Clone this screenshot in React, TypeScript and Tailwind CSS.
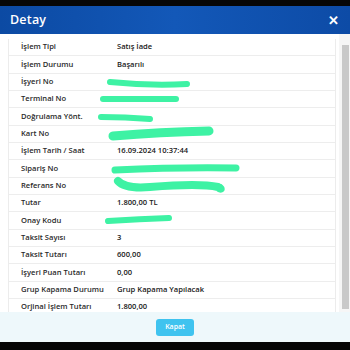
import React from "react";

const rows: [string, string][] = [
  ["İşlem Tipi", "Satış İade"],
  ["İşlem Durumu", "Başarılı"],
  ["İşyeri No", ""],
  ["Terminal No", ""],
  ["Doğrulama Yönt.", ""],
  ["Kart No", ""],
  ["İşlem Tarih / Saat", "16.09.2024 10:37:44"],
  ["Sipariş No", ""],
  ["Referans No", ""],
  ["Tutar", "1.800,00 TL"],
  ["Onay Kodu", ""],
  ["Taksit Sayısı", "3"],
  ["Taksit Tutarı", "600,00"],
  ["İşyeri Puan Tutarı", "0,00"],
  ["Grup Kapama Durumu", "Grup Kapama Yapılacak"],
  ["Orjinal İşlem Tutarı", "1.800,00"],
];

export default function App() {
  return (
    <div
      className="w-[350px] h-[350px] bg-black flex flex-col relative overflow-hidden"
      style={{ fontFamily: '"Open Sans", "Noto Sans", sans-serif' }}
    >
      <div className="h-[6px] bg-[#070707]" />
      <div className="h-[28px] bg-gradient-to-r from-[#0c4aa3] via-[#1358b8] to-[#0d4ba6] flex items-center justify-between px-[10px]">
        <span className="text-white text-[12.5px] font-semibold tracking-[0.2px]">Detay</span>
        <span className="text-white text-[13px] font-bold leading-none mr-[1px]">✕</span>
      </div>
      <div className="h-[278px] bg-white flex overflow-hidden">
        <div className="flex-1 pl-[8px] pr-[3px] pt-[5px]">
          <div className="border-x border-[#ececec]">
            {rows.map(([k, v], i) => (
              <div
                key={i}
                className="h-[17.33px] flex items-center border-b border-[#ededed] text-[7.6px] font-semibold text-[#222]"
              >
                <span className="w-[108px] shrink-0 pl-[12px] text-[#2a2a2a]">{k}</span>
                <span className="text-[#1a1a1a]">{v}</span>
              </div>
            ))}
          </div>
        </div>
        <div className="w-[11px] bg-[#f6f6f6] flex flex-col pt-[11px] pl-[3px]">
          <div className="h-[264px] w-[7px] bg-[#c9c9c9]" />
        </div>
      </div>
      <div className="h-[30px] bg-[#eef8fb] flex items-center justify-center">
        <button className="w-[38px] h-[17px] rounded-[3px] bg-[#3fc3ef] text-white text-[7px] font-semibold">
          Kapat
        </button>
      </div>
      <div className="flex-1 bg-[#050505]" />
      <svg className="absolute left-0 top-0 pointer-events-none" width="350" height="350">
        <g stroke="#3ef2a4" strokeLinecap="round" fill="none">
          <path d="M110 82 Q150 86 187 84" strokeWidth="6" />
          <path d="M103 99 Q140 99 176 99" strokeWidth="6" />
          <path d="M101 117 Q125 117 150 119" strokeWidth="6" />
          <path d="M113 136 Q160 132 209 131" strokeWidth="9" />
          <path d="M115 170 Q180 167 236 168" strokeWidth="7" />
          <path d="M118 181 Q125 189 150 187 Q200 183 218 187 Q222 190 220 188" strokeWidth="8" />
          <path d="M108 221 Q140 219 169 218" strokeWidth="6" />
        </g>
      </svg>
    </div>
  );
}
